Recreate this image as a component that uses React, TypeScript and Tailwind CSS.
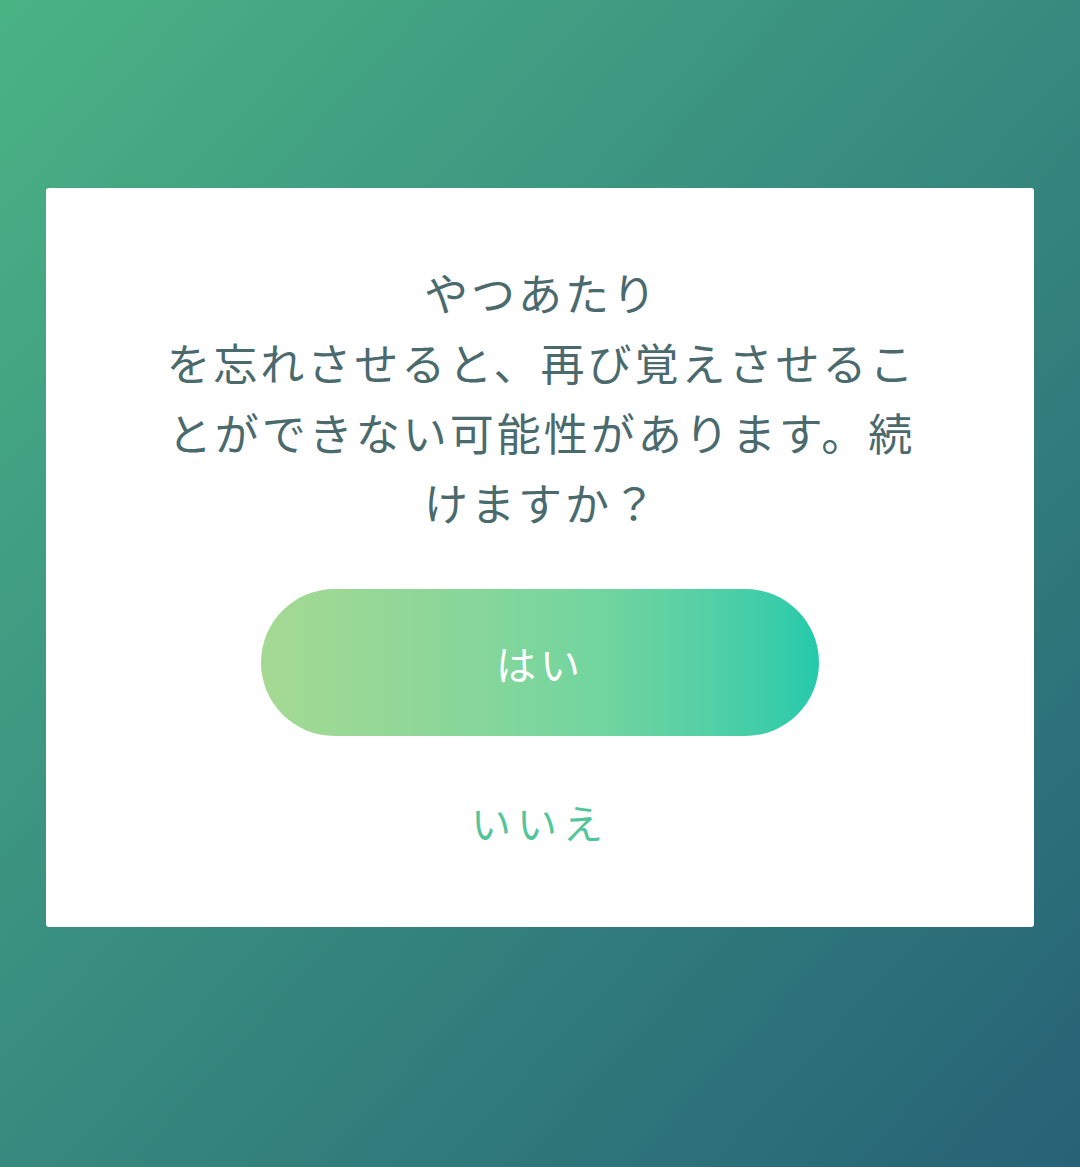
export default function App() {
  return (
    <div
      className="flex min-h-[1167px] w-full justify-center bg-gradient-to-br from-[#4ab384] to-[#276276] px-[46px] pt-[188px]"
      style={{ fontFamily: '"Noto Sans CJK JP", "Noto Sans", sans-serif' }}
    >
      <div className="flex h-[739px] w-full flex-col items-center rounded-[3px] bg-white pt-[69px]">
        {/* message */}
        <p className="max-w-[770px] pl-[3px] text-center text-[44px] leading-[70px] tracking-[3px] text-[#4a6a6e]">
          やつあたり
          <br />
          を忘れさせると、再び覚えさせることができない可能性があります。続けますか？
        </p>

        {/* confirm */}
        <button className="mt-[52px] flex h-[147px] w-[558px] items-center justify-center rounded-full bg-gradient-to-r from-[#a5d992] via-[#72d59f] via-60% to-[#22caab] text-[40px] tracking-[4px] text-white">
          はい
        </button>

        {/* cancel */}
        <button className="mt-[56px] h-[60px] text-[40px] leading-[60px] tracking-[6px] text-[#52c59a]">
          いいえ
        </button>
      </div>
    </div>
  );
}
